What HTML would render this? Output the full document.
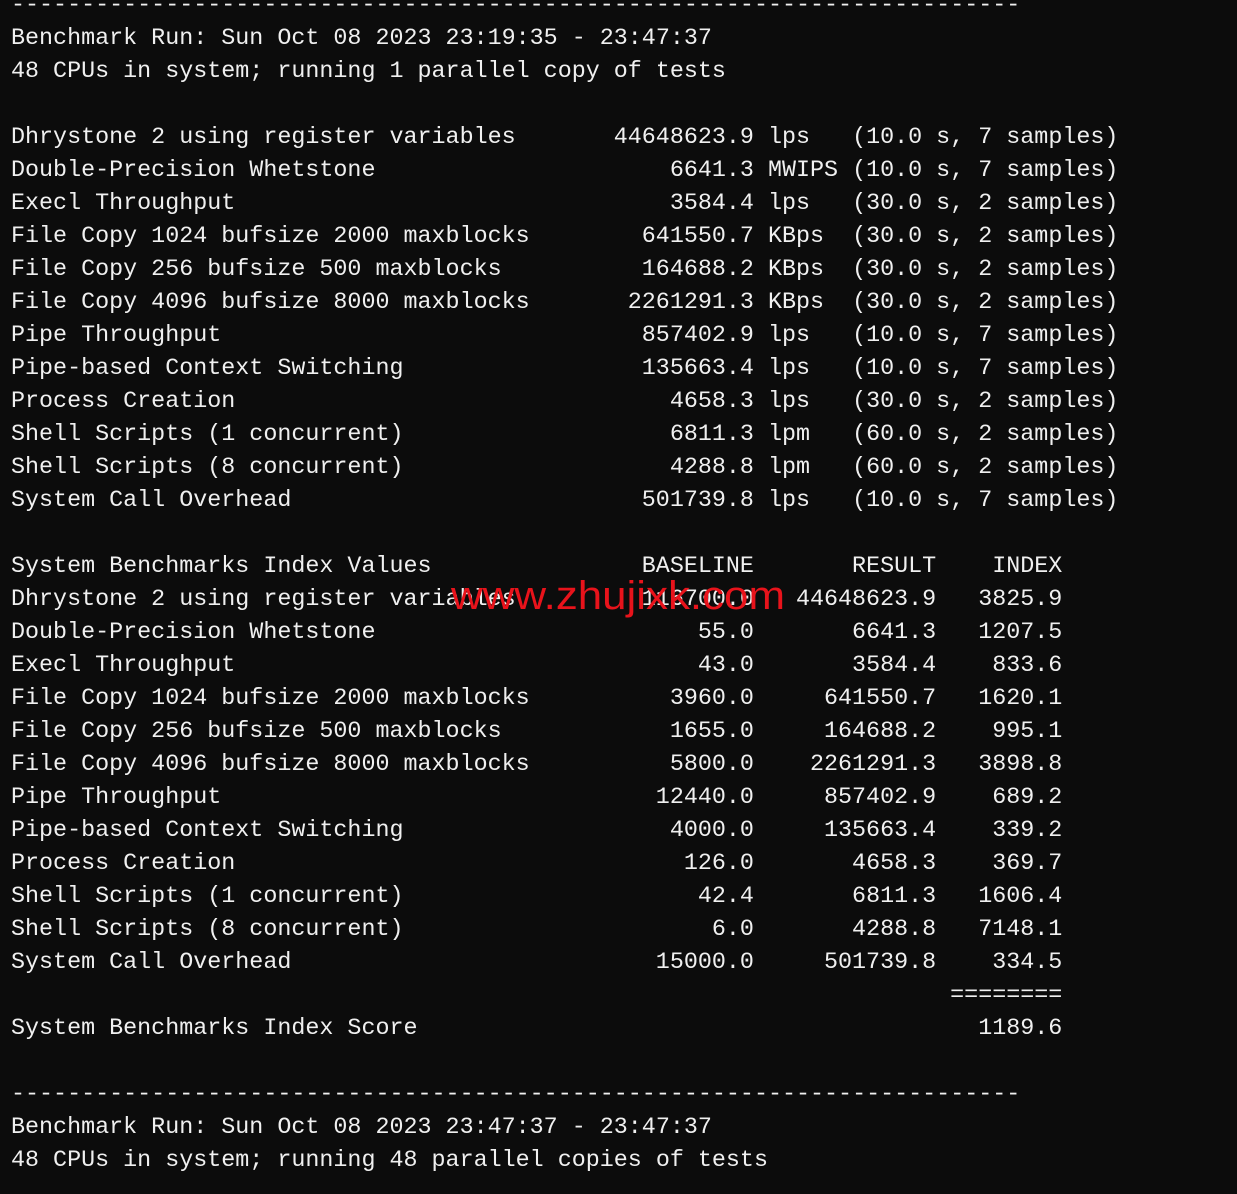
<!DOCTYPE html>
<html><head><meta charset="utf-8">
<style>
html,body{margin:0;padding:0;background:#0c0c0c;width:1237px;height:1194px;overflow:hidden}
pre{position:absolute;left:11px;top:-10px;margin:0;font-family:"Liberation Mono",monospace;font-size:23.36px;line-height:33px;color:#f0f0f0;white-space:pre}
.n{display:inline-block;width:41ch}
.a{display:inline-block;width:12ch;text-align:right}
.b{display:inline-block;width:13ch;text-align:right}
.c{display:inline-block;width:9ch;text-align:right}
.u{display:inline-block;width:5ch}
svg{position:absolute;left:0;top:0}
</style></head><body>
<pre>------------------------------------------------------------------------
Benchmark Run: Sun Oct 08 2023 23:19:35 - 23:47:37
48 CPUs in system; running 1 parallel copy of tests

<span class="n">Dhrystone 2 using register variables</span><span class="a">44648623.9</span> <span class="u">lps</span> (10.0 s, 7 samples)
<span class="n">Double-Precision Whetstone</span><span class="a">6641.3</span> <span class="u">MWIPS</span> (10.0 s, 7 samples)
<span class="n">Execl Throughput</span><span class="a">3584.4</span> <span class="u">lps</span> (30.0 s, 2 samples)
<span class="n">File Copy 1024 bufsize 2000 maxblocks</span><span class="a">641550.7</span> <span class="u">KBps</span> (30.0 s, 2 samples)
<span class="n">File Copy 256 bufsize 500 maxblocks</span><span class="a">164688.2</span> <span class="u">KBps</span> (30.0 s, 2 samples)
<span class="n">File Copy 4096 bufsize 8000 maxblocks</span><span class="a">2261291.3</span> <span class="u">KBps</span> (30.0 s, 2 samples)
<span class="n">Pipe Throughput</span><span class="a">857402.9</span> <span class="u">lps</span> (10.0 s, 7 samples)
<span class="n">Pipe-based Context Switching</span><span class="a">135663.4</span> <span class="u">lps</span> (10.0 s, 7 samples)
<span class="n">Process Creation</span><span class="a">4658.3</span> <span class="u">lps</span> (30.0 s, 2 samples)
<span class="n">Shell Scripts (1 concurrent)</span><span class="a">6811.3</span> <span class="u">lpm</span> (60.0 s, 2 samples)
<span class="n">Shell Scripts (8 concurrent)</span><span class="a">4288.8</span> <span class="u">lpm</span> (60.0 s, 2 samples)
<span class="n">System Call Overhead</span><span class="a">501739.8</span> <span class="u">lps</span> (10.0 s, 7 samples)

<span class="n">System Benchmarks Index Values</span><span class="a">BASELINE</span><span class="b">RESULT</span><span class="c">INDEX</span>
<span class="n">Dhrystone 2 using register variables</span><span class="a">116700.0</span><span class="b">44648623.9</span><span class="c">3825.9</span>
<span class="n">Double-Precision Whetstone</span><span class="a">55.0</span><span class="b">6641.3</span><span class="c">1207.5</span>
<span class="n">Execl Throughput</span><span class="a">43.0</span><span class="b">3584.4</span><span class="c">833.6</span>
<span class="n">File Copy 1024 bufsize 2000 maxblocks</span><span class="a">3960.0</span><span class="b">641550.7</span><span class="c">1620.1</span>
<span class="n">File Copy 256 bufsize 500 maxblocks</span><span class="a">1655.0</span><span class="b">164688.2</span><span class="c">995.1</span>
<span class="n">File Copy 4096 bufsize 8000 maxblocks</span><span class="a">5800.0</span><span class="b">2261291.3</span><span class="c">3898.8</span>
<span class="n">Pipe Throughput</span><span class="a">12440.0</span><span class="b">857402.9</span><span class="c">689.2</span>
<span class="n">Pipe-based Context Switching</span><span class="a">4000.0</span><span class="b">135663.4</span><span class="c">339.2</span>
<span class="n">Process Creation</span><span class="a">126.0</span><span class="b">4658.3</span><span class="c">369.7</span>
<span class="n">Shell Scripts (1 concurrent)</span><span class="a">42.4</span><span class="b">6811.3</span><span class="c">1606.4</span>
<span class="n">Shell Scripts (8 concurrent)</span><span class="a">6.0</span><span class="b">4288.8</span><span class="c">7148.1</span>
<span class="n">System Call Overhead</span><span class="a">15000.0</span><span class="b">501739.8</span><span class="c">334.5</span>
<span class="n"></span><span class="a"></span><span class="b"></span><span class="c">========</span>
<span class="n">System Benchmarks Index Score</span><span class="a"></span><span class="b"></span><span class="c">1189.6</span>

------------------------------------------------------------------------
Benchmark Run: Sun Oct 08 2023 23:47:37 - 23:47:37
48 CPUs in system; running 48 parallel copies of tests</pre>
<svg width="1237" height="1194"><text x="451" y="609" font-family="Liberation Sans, sans-serif" font-size="40" fill="#e8131b" textLength="334" lengthAdjust="spacingAndGlyphs">www.zhujixk.com</text></svg>
</body></html>
